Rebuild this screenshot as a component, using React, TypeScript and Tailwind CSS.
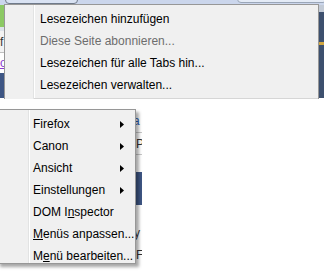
import React from 'react'

type Item = { label: React.ReactNode; disabled?: boolean; sub?: boolean }

const topItems: Item[] = [
  { label: 'Lesezeichen hinzufügen' },
  { label: 'Diese Seite abonnieren...', disabled: true },
  { label: 'Lesezeichen für alle Tabs hin...' },
  { label: 'Lesezeichen verwalten...' },
]

const subItems: Item[] = [
  { label: 'Firefox', sub: true },
  { label: 'Canon', sub: true },
  { label: 'Ansicht', sub: true },
  { label: 'Einstellungen', sub: true },
  { label: <>DOM I<u>n</u>spector</> },
  { label: <><u>M</u>enüs anpassen...</> },
  { label: <>M<u>e</u>nü bearbeiten...</> },
]

function Arrow() {
  return (
    <svg width="4" height="7" viewBox="0 0 4 7" className="shrink-0">
      <path d="M0 0 L4 3.5 L0 7 Z" fill="#000" />
    </svg>
  )
}

export default function App() {
  return (
    <div
      className="relative w-[324px] h-[275px] bg-white overflow-hidden text-[12px] text-black"
      style={{ fontFamily: '"Liberation Sans", Arial, sans-serif' }}
    >
      {/* background window bits */}
      <div className="absolute left-0 top-0 w-full h-[5px] bg-[#cbd6ec]" />
      <div className="absolute left-[5px] top-[-10px] w-[73px] h-[14px] rounded border border-[#6f7a8a] bg-[#d9e2f2]" />
      <div className="absolute left-[237px] top-[-10px] w-[90px] h-[13px] rounded border border-[#9aa6b8] bg-[#e4ebf6]" />

      <div className="absolute left-0 top-[5px] w-[4px] h-[93px] flex flex-col overflow-hidden">
        <div className="h-[22px] bg-[#8cc964]" />
        <div className="h-[4px] bg-[#dde3ea]" />
        <div className="h-[22px] bg-[#f3f3f3] border-b border-[#c0c0c0] text-[#333] leading-[22px]">f</div>
        <div className="h-[20px] text-[#8a3ad0] underline leading-[20px]">o</div>
        <div className="flex-1 bg-[#3e5684]" />
      </div>

      <div className="absolute left-[319px] top-[5px] w-[5px] h-[93px] flex flex-col bg-[#c2cad6]">
        <div className="h-[7px]" />
        <div className="flex-1 bg-[#3d506e] flex flex-col pt-[30px]">
          <div className="h-[3px] bg-[#d0a640]" />
        </div>
      </div>

      <div className="absolute left-[136px] top-[110px] w-[6px] h-[156px] flex flex-col overflow-hidden bg-white">
        <div className="h-[22px] text-[#2a5db0] leading-[22px] -ml-[3px]">a</div>
        <div className="h-[22px] border-t border-[#c8c8c8] text-[#333] leading-[22px]">P</div>
        <div className="h-[22px] border-t border-[#c8c8c8]" />
        <div className="h-[40px] bg-[#3e5684]" />
        <div className="h-[20px]" />
        <div className="h-[22px] text-[#333] leading-[22px] -ml-[2px]">y</div>
        <div className="h-[22px] text-[#333] leading-[22px]">F</div>
      </div>

      {/* top menu */}
      <div className="absolute left-[4px] top-[4px] w-[315px] h-[95px] bg-[#f0f0f0] border-l border-t border-r border-[#979797] overflow-hidden">
        <div className="absolute left-[28px] top-0 bottom-0 w-[2px] border-l border-[#e2e3e3] bg-white" />
        <div className="flex flex-col pt-[3px]">
          {topItems.map((it, i) => (
            <div key={i} className="h-[22px] flex items-center pl-[35px] whitespace-nowrap">
              <span className={it.disabled ? 'text-[#6d6d6d]' : ''}>{it.label}</span>
            </div>
          ))}
        </div>
        <div className="absolute left-[29px] right-0 bottom-0 h-px bg-[#d6d6d6]" />
      </div>

      {/* submenu */}
      <div className="absolute left-[-3px] top-[109px] w-[139px] h-[155px] bg-[#f0f0f0] border border-[#979797] shadow-[3px_3px_3px_rgba(0,0,0,0.35)]">
        <div className="absolute left-[30px] top-0 bottom-0 w-[2px] border-l border-[#e2e3e3] bg-white" />
        <div className="flex flex-col pt-[3px]">
          {subItems.map((it, i) => (
            <div key={i} className="h-[22px] flex items-center pl-[35px] pr-[11px] whitespace-nowrap">
              <span className="flex-1">{it.label}</span>
              {it.sub && <Arrow />}
            </div>
          ))}
        </div>
      </div>
    </div>
  )
}
